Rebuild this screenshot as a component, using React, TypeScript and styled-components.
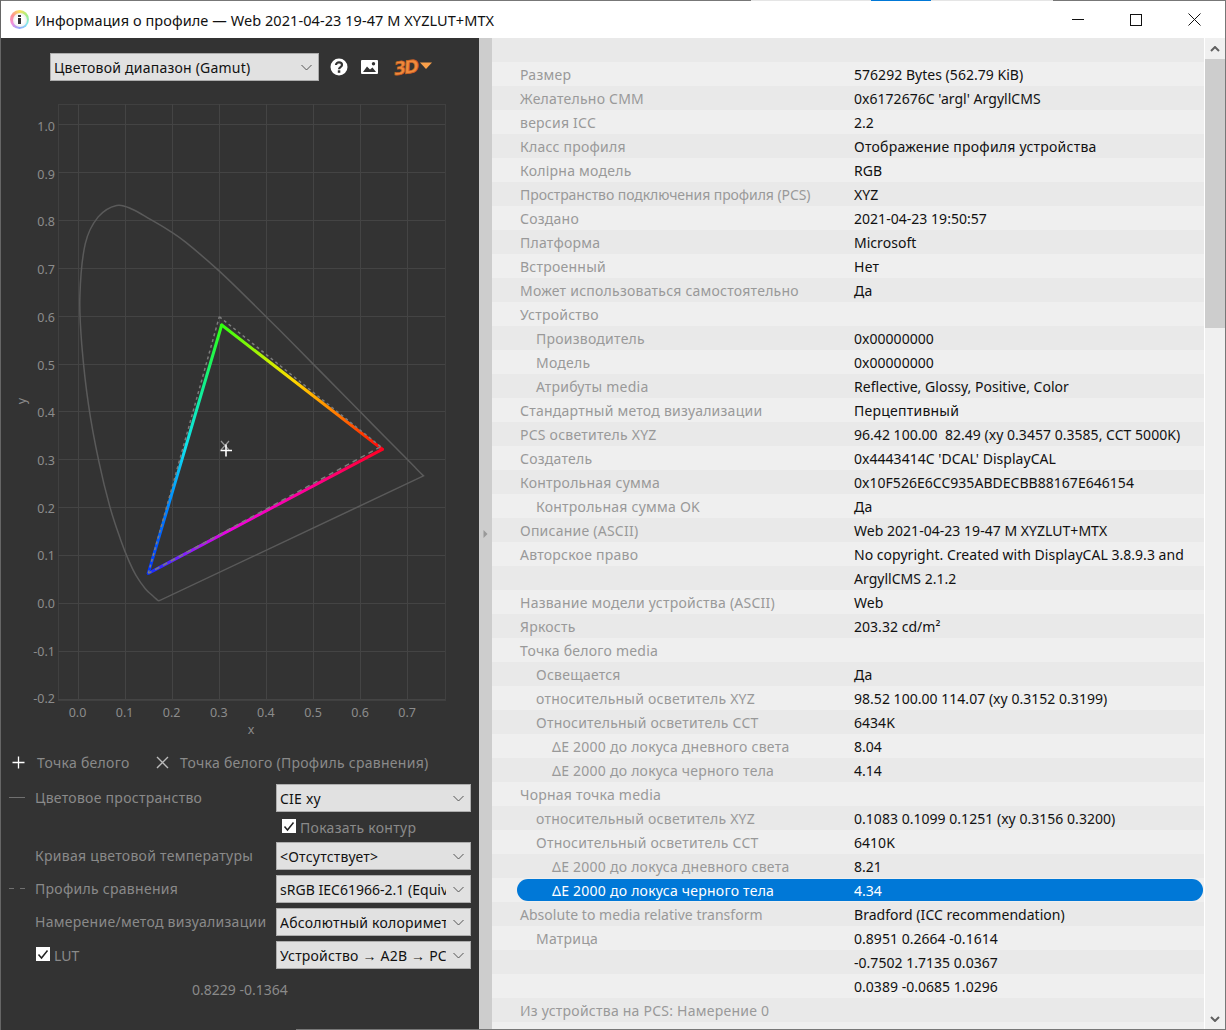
import React from "react";
import styled, { createGlobalStyle } from "styled-components";

const Global = createGlobalStyle`
  html, body { margin: 0; padding: 0; background: #fff; overflow: hidden; }
  * { box-sizing: border-box; }
`;

const FONT = `"Noto Sans", "Open Sans", sans-serif`;
const spacing = (t: string) => (/[а-яё]/i.test(t) ? "0.24px" : "0.03px");

const Win = styled.div`
  width: 1226px; height: 1030px; display: flex; flex-direction: column;
  font-family: ${FONT}; font-size: 14px; overflow: hidden; background: #fff;
  border-left: 1px solid #666; border-right: 1px solid #777;
`;
const TopEdge = styled.div`
  height: 1px; flex: none;
  background: linear-gradient(to right, #777 0 750px, #e5e5e5 750px 870px, #0078d7 870px 930px, #e5e5e5 930px 1052px, #777 1052px);
`;
const BottomEdge = styled.div`
  height: 1px; flex: none;
  background: linear-gradient(to right, #333 0 295px, #777 295px);
`;
const TitleBar = styled.div`
  height: 37px; flex: none; display: flex; align-items: center; position: relative; background: #fff;
`;
const AppIcon = styled.div`
  width: 19px; height: 19px; margin-left: 9px; border-radius: 50%; flex: none; position: relative;
  background: conic-gradient(#f8e060, #a0f080, #80e8f0, #90a8ff, #f090e0, #ff9090, #f8e060);
  display: flex; align-items: center; justify-content: center;
`;
const AppIconFace = styled.div`
  width: 14px; height: 14px; border-radius: 50%; background: radial-gradient(#fff 40%, #ddd);
  display: flex; flex-direction: column; align-items: center; justify-content: center; gap: 1px;
`;
const IconDot = styled.div`width: 3px; height: 2px; background: #333;`;
const IconStem = styled.div`width: 3px; height: 6px; background: #333;`;
const TitleText = styled.div`
  margin-left: 6px; font-size: 14.5px; color: #111; white-space: nowrap; letter-spacing: 0.07px;
`;
const CapButtons = styled.div`
  margin-left: auto; display: flex; height: 100%; margin-right: 1px;
`;
const CapButton = styled.div`
  width: 58.5px; display: flex; align-items: center; justify-content: center; color: #111;
`;
const Body = styled.div`display: flex; flex: 1; min-height: 0;`;
const Left = styled.div`
  width: 478px; flex: none; background: #333; position: relative; color: #8e8e8e;
`;
const Splitter = styled.div`
  width: 13px; flex: none; background: #cdcdcd; position: relative;
  display: flex; align-items: center; justify-content: center;
`;
const Right = styled.div`flex: 1; min-width: 0; display: flex; background: #f0f0f0;`;
const Table = styled.div`flex: 1; min-width: 0; overflow: hidden; position: relative;`;
const Row = styled.div<{ $odd: boolean }>`
  height: 24px; display: flex; align-items: center; background: ${p => p.$odd ? "#efefef" : "#e9e9e9"}; position: relative;
`;
const Pill = styled.div`
  position: absolute; left: 25px; right: 1px; top: 1px; bottom: 1px; border-radius: 11px; background: #0078d7;
`;
const Label = styled.div<{ $level: number; $sel?: boolean; $ls: string }>`
  position: relative; width: 362px; padding-left: ${p => 28 + p.$level * 16}px; color: ${p => p.$sel ? "#fff" : "#999"};
  white-space: pre; letter-spacing: ${p => p.$ls};
`;
const Value = styled.div<{ $sel?: boolean; $ls: string }>`
  position: relative; color: ${p => p.$sel ? "#fff" : "#111"}; white-space: pre; letter-spacing: ${p => p.$ls};
`;
const ScrollBar = styled.div`
  width: 20px; margin-left: 1px; flex: none; display: flex; flex-direction: column; background: #f0f0f0; box-shadow: -1px 0 0 #fff;
`;
const ScrollBtn = styled.div`
  height: 21px; flex: none; display: flex; align-items: center; justify-content: center;
`;
const ScrollThumb = styled.div`height: 269px; background: #cdcdcd; flex: none;`;
const ScrollTrack = styled.div`flex: 1;`;

const Combo = styled.div<{ $x: number; $y: number; $w: number; $ls?: string }>`
  position: absolute; left: ${p => p.$x}px; top: ${p => p.$y}px; width: ${p => p.$w}px; height: 28px;
  background: #e1e1e1; border: 1px solid #adadad; display: flex; align-items: center; color: #111;
  padding-left: 3px; font-size: 14px; letter-spacing: ${p => p.$ls ?? "0.22px"};
`;
const ComboText = styled.div`flex: 1; min-width: 0; overflow: hidden; white-space: nowrap; margin-right: 24px;`;
const Arrow = styled.span`font-family: "Liberation Sans", sans-serif;`;
const ComboArrow = styled.svg`position: absolute; right: 5px; top: 10px;`;
const Caption = styled.div<{ $x: number; $y: number; $ls?: string }>`
  position: absolute; left: ${p => p.$x}px; top: ${p => p.$y}px; color: #8a8a8a; height: 20px; line-height: 20px;
  white-space: nowrap; letter-spacing: ${p => p.$ls ?? "0.28px"};
`;
const Box = styled.div<{ $x: number; $y: number }>`
  position: absolute; left: ${p => p.$x}px; top: ${p => p.$y}px; width: 14px; height: 14px; background: #fff;
  display: flex; align-items: center; justify-content: center;
`;
const Glyph = styled.svg<{ $x: number; $y: number }>`
  position: absolute; left: ${p => p.$x}px; top: ${p => p.$y}px; overflow: visible;
`;
const ChartSvg = styled.svg`
  position: absolute; left: -1px; top: 0; font-family: ${FONT}; font-size: 12.5px;
`;

const rows: [string, string, number, string?][] = [
  ["", "", 0],
  ["Размер", "576292 Bytes (562.79 KiB)", 0],
  ["Желательно CMM", "0x6172676C 'argl' ArgyllCMS", 0],
  ["версия ICC", "2.2", 0],
  ["Класс профиля", "Отображение профиля устройства", 0],
  ["Колірна модель", "RGB", 0],
  ["Пространство подключения профиля (PCS)", "XYZ", 0, "-0.07px"],
  ["Создано", "2021-04-23 19:50:57", 0],
  ["Платформа", "Microsoft", 0],
  ["Встроенный", "Нет", 0],
  ["Может использоваться самостоятельно", "Да", 0],
  ["Устройство", "", 0],
  ["Производитель", "0x00000000", 1],
  ["Модель", "0x00000000", 1],
  ["Атрибуты media", "Reflective, Glossy, Positive, Color", 1],
  ["Стандартный метод визуализации", "Перцептивный", 0],
  ["PCS осветитель XYZ", "96.42 100.00  82.49 (xy 0.3457 0.3585, CCT 5000K)", 0],
  ["Создатель", "0x4443414C 'DCAL' DisplayCAL", 0],
  ["Контрольная сумма", "0x10F526E6CC935ABDECBB88167E646154", 0],
  ["Контрольная сумма OK", "Да", 1],
  ["Описание (ASCII)", "Web 2021-04-23 19-47 M XYZLUT+MTX", 0],
  ["Авторское право", "No copyright. Created with DisplayCAL 3.8.9.3 and", 0],
  ["", "ArgyllCMS 2.1.2", 0],
  ["Название модели устройства (ASCII)", "Web", 0],
  ["Яркость", "203.32 cd/m²", 0],
  ["Точка белого media", "", 0],
  ["Освещается", "Да", 1],
  ["относительный осветитель XYZ", "98.52 100.00 114.07 (xy 0.3152 0.3199)", 1],
  ["Относительный осветитель CCT", "6434K", 1],
  ["ΔE 2000 до локуса дневного света", "8.04", 2],
  ["ΔE 2000 до локуса черного тела", "4.14", 2],
  ["Чорная точка media", "", 0],
  ["относительный осветитель XYZ", "0.1083 0.1099 0.1251 (xy 0.3156 0.3200)", 1],
  ["Относительный осветитель CCT", "6410K", 1],
  ["ΔE 2000 до локуса дневного света", "8.21", 2],
  ["ΔE 2000 до локуса черного тела", "4.34", 2],
  ["Absolute to media relative transform", "Bradford (ICC recommendation)", 0],
  ["Матрица", "0.8951 0.2664 -0.1614", 1],
  ["", "-0.7502 1.7135 0.0367", 0],
  ["", "0.0389 -0.0685 1.0296", 0],
  ["Из устройства на PCS: Намерение 0", "", 0],
  ["", "", 0],
];

const locus: number[][] = [
  [.1741,.005],[.1714,.0051],[.1689,.0069],[.1644,.0109],[.1566,.0177],[.144,.0297],[.1241,.0578],[.1096,.0868],[.0913,.1327],[.0687,.2007],[.0454,.295],[.0235,.4127],[.0092,.5384],[.0050,.6400],[.0165,.7502],[.044,.806],[.083,.83],[.1162,.8222],[.1547,.8009],[.1929,.7786],[.2296,.7533],[.3016,.6923],[.3731,.6245],[.4441,.5547],[.5125,.4866],[.5752,.4242],[.627,.3725],[.6915,.3083],[.719,.2809],[.7347,.2653],
];
// chart coordinates are page coordinates minus the title bar (y - 38)
const OY = 38;
const px = (x: number) => 77.5 + x * 471;
const py = (y: number) => 603 - OY - y * 479;

// Catmull-Rom smoothing of the spectral locus, closed by the straight purple line
const locusPath = (() => {
  const p = locus.map(([x, y]) => [px(x), py(y)]);
  let d = `M${p[0][0].toFixed(1)} ${p[0][1].toFixed(1)}`;
  for (let i = 0; i < p.length - 1; i++) {
    const a = p[Math.max(i - 1, 0)], b = p[i], c = p[i + 1], e = p[Math.min(i + 2, p.length - 1)];
    const c1 = [b[0] + (c[0] - a[0]) / 6, b[1] + (c[1] - a[1]) / 6];
    const c2 = [c[0] - (e[0] - b[0]) / 6, c[1] - (e[1] - b[1]) / 6];
    d += `C${c1[0].toFixed(1)} ${c1[1].toFixed(1)} ${c2[0].toFixed(1)} ${c2[1].toFixed(1)} ${c[0].toFixed(1)} ${c[1].toFixed(1)}`;
  }
  return d + "Z";
})();

const xTicks = [0, .1, .2, .3, .4, .5, .6, .7];
const yTicks = [1, .9, .8, .7, .6, .5, .4, .3, .2, .1, 0, -.1, -.2];

const G = { x: 221.7, y: 325 - OY };
const R = { x: 382.3, y: 449.3 - OY };
const B = { x: 148.3, y: 573.3 - OY };
const G2 = { x: 219.3, y: 316.7 - OY };
const R2 = { x: 380.7, y: 446.7 - OY };

const Chevron = () => (
  <ComboArrow width="13" height="7" viewBox="0 0 13 7">
    <path d="M1.5 1 L6.5 6 L11.5 1" fill="none" stroke="#555" strokeWidth="1" />
  </ComboArrow>
);
const Check = () => (
  <svg width="12" height="12" viewBox="0 0 12 12">
    <path d="M1.5 6.5 L4.5 10 L10.5 2.5" fill="none" stroke="#222" strokeWidth="1.5" />
  </svg>
);

const Chart = () => (
  <ChartSvg width="480" height="720">
    <defs>
      <linearGradient id="gr" gradientUnits="userSpaceOnUse" x1={G.x} y1={G.y} x2={R.x} y2={R.y}>
        <stop offset="0" stopColor="#30ff10" />
        <stop offset=".3" stopColor="#c8f000" />
        <stop offset=".45" stopColor="#ffd800" />
        <stop offset=".7" stopColor="#ff8000" />
        <stop offset=".9" stopColor="#ff3000" />
        <stop offset="1" stopColor="#ff0010" />
      </linearGradient>
      <linearGradient id="rb" gradientUnits="userSpaceOnUse" x1={R.x} y1={R.y} x2={B.x} y2={B.y}>
        <stop offset="0" stopColor="#ff0020" />
        <stop offset=".3" stopColor="#ff0090" />
        <stop offset=".65" stopColor="#f000e0" />
        <stop offset=".85" stopColor="#8020ff" />
        <stop offset="1" stopColor="#1030ff" />
      </linearGradient>
      <linearGradient id="bg" gradientUnits="userSpaceOnUse" x1={B.x} y1={B.y} x2={G.x} y2={G.y}>
        <stop offset="0" stopColor="#0030ff" />
        <stop offset=".3" stopColor="#0090ff" />
        <stop offset=".5" stopColor="#10e0f0" />
        <stop offset=".75" stopColor="#10f090" />
        <stop offset="1" stopColor="#30ff10" />
      </linearGradient>
    </defs>
    <g stroke="#444" strokeWidth="1" shapeRendering="crispEdges">
      <rect x="58.5" y="66.5" width="387" height="596" fill="none" stroke="#404040" />
      {xTicks.map(t => <line key={t} x1={Math.round(px(t)) + .5} x2={Math.round(px(t)) + .5} y1="66" y2="662" />)}
      {yTicks.map(t => <line key={t} x1="58" x2="445" y1={Math.round(py(t)) + .5} y2={Math.round(py(t)) + .5} />)}
    </g>
    <path d={locusPath} fill="none" stroke="#5a5a5a" strokeWidth="1.5" />
    <g fill="none" strokeLinecap="round">
      <line x1={G.x} y1={G.y} x2={R.x} y2={R.y} stroke="url(#gr)" strokeWidth="3" />
      <line x1={R.x} y1={R.y} x2={B.x} y2={B.y} stroke="url(#rb)" strokeWidth="3" />
      <line x1={B.x} y1={B.y} x2={G.x} y2={G.y} stroke="url(#bg)" strokeWidth="3" />
    </g>
    <g fill="none" stroke="#7c7c7c" strokeWidth="1.5" strokeDasharray="5 4">
      <line x1={G2.x} y1={G2.y} x2={R2.x} y2={R2.y} strokeDasharray="3 3" />
      <line x1={R2.x} y1={R2.y} x2={B.x} y2={B.y} />
      <line x1={B.x} y1={B.y} x2={G2.x} y2={G2.y} strokeDasharray="3 3" />
    </g>
    <path d="M221 403 L229 412 M229 403 L221 412" stroke="#999" strokeWidth="1.2" fill="none" />
    <path d="M226 444.5 V456.5 M220.500 450.500 H232" transform={`translate(0 ${-OY})`} stroke="#fff" strokeWidth="1.6" fill="none" />
    <g fill="#8c8c8c" stroke="none">
      {yTicks.map(t => <text key={t} x="55" y={570 - t * 477} textAnchor="end">{t.toFixed(1)}</text>)}
      {xTicks.map(t => <text key={t} x={px(t)} y="678.500" textAnchor="middle">{t.toFixed(1)}</text>)}
      <text x="251" y="696" textAnchor="middle">x</text>
      <text x="0" y="0" textAnchor="middle" transform="translate(26 363) rotate(-90)">y</text>
    </g>
  </ChartSvg>
);

export default function App() {
  return (
    <Win>
      <Global />
      <TopEdge />
      <TitleBar>
        <AppIcon>
          <AppIconFace>
            <IconDot />
            <IconStem />
          </AppIconFace>
        </AppIcon>
        <TitleText>Информация о профиле — Web 2021-04-23 19-47 M XYZLUT+MTX</TitleText>
        <CapButtons>
          <CapButton>
            <svg width="12" height="2" viewBox="0 0 12 2"><rect width="12" height="1" fill="#111" /></svg>
          </CapButton>
          <CapButton>
            <svg width="12" height="12" viewBox="0 0 12 12"><rect x=".5" y=".5" width="11" height="11" fill="none" stroke="#111" /></svg>
          </CapButton>
          <CapButton>
            <svg width="13" height="13" viewBox="0 0 13 13"><path d="M.5 .5 L12.500 12.500 M12.500 .5 L.5 12.500" stroke="#111" fill="none" /></svg>
          </CapButton>
        </CapButtons>
      </TitleBar>
      <Body>
        <Left>
          <Combo $x={49} $y={15} $w={269}>
            <ComboText>Цветовой диапазон (Gamut)</ComboText>
            <Chevron />
          </Combo>
          <Glyph $x={329} $y={20} width="18" height="18" viewBox="0 0 18 18">
            <circle cx="9" cy="9" r="8.500" fill="#fff" />
            <path d="M6 7 C6 3.600 12 3.600 12 7 C12 9.200 9 9 9 11.200" fill="none" stroke="#333" strokeWidth="2.200" />
            <rect x="7.800" y="12.300" width="2.500" height="2.500" fill="#333" />
          </Glyph>
          <Glyph $x={360} $y={22} width="17" height="14" viewBox="0 0 17 14">
            <rect x="0" y="0" width="17" height="14" rx="1" fill="#fff" />
            <path d="M2 12 L6 6.500 L9 9.500 L11.500 7.500 L15 12 Z" fill="#333" />
            <circle cx="12.500" cy="3.800" r="1.700" fill="#333" />
          </Glyph>
          <Glyph $x={393} $y={16} width="42" height="26" viewBox="0 0 42 26">
            <text x="0" y="20" transform="rotate(-8 10 15)" fontFamily="'DejaVu Sans', sans-serif" fontStyle="italic" fontWeight="700" fontSize="18" fill="#f08a3c" stroke="#c85f20" strokeWidth=".7" letterSpacing="-2.200">3D</text>
            <path d="M26 8.500 H38 L32 15 Z" fill="#f9a04a" />
          </Glyph>
          <Chart />

          <Glyph $x={11} $y={718} width="13" height="13" viewBox="0 0 13 13">
            <path d="M6.500 .5 V12.500 M.5 6.500 H12.500" stroke="#fff" strokeWidth="1.300" fill="none" />
          </Glyph>
          <Caption $x={36} $y={715}>Точка белого</Caption>
          <Glyph $x={155} $y={718} width="13" height="13" viewBox="0 0 13 13">
            <path d="M1 1 L12 12 M12 1 L1 12" stroke="#bbb" strokeWidth="1.400" fill="none" />
          </Glyph>
          <Caption $x={179} $y={715}>Точка белого (Профиль сравнения)</Caption>

          <Glyph $x={8} $y={759} width="17" height="2" viewBox="0 0 17 2"><rect width="16" height="1" fill="#707070" /></Glyph>
          <Caption $x={34} $y={750}>Цветовое пространство</Caption>
          <Combo $x={275} $y={746} $w={195}><ComboText>CIE xy</ComboText><Chevron /></Combo>

          <Box $x={281} $y={781}><Check /></Box>
          <Caption $x={299} $y={780}>Показать контур</Caption>

          <Caption $x={34} $y={808}>Кривая цветовой температуры</Caption>
          <Combo $x={275} $y={804} $w={195}><ComboText>&lt;Отсутствует&gt;</ComboText><Chevron /></Combo>

          <Glyph $x={8} $y={850} width="17" height="2" viewBox="0 0 17 2">
            <rect width="5" height="1" fill="#707070" /><rect x="11" width="5" height="1" fill="#707070" />
          </Glyph>
          <Caption $x={34} $y={841}>Профиль сравнения</Caption>
          <Combo $x={275} $y={837} $w={195} $ls="0.02px"><ComboText>sRGB IEC61966-2.1 (Equivalent to)</ComboText><Chevron /></Combo>

          <Caption $x={34} $y={874}>Намерение/метод визуализации</Caption>
          <Combo $x={275} $y={870} $w={195}><ComboText>Абсолютный колориметрический</ComboText><Chevron /></Combo>

          <Box $x={35} $y={909}><Check /></Box>
          <Caption $x={53} $y={908} $ls="0">LUT</Caption>
          <Combo $x={275} $y={903} $w={195}><ComboText>Устройство <Arrow>→</Arrow> A2B <Arrow>→</Arrow> PCS</ComboText><Chevron /></Combo>

          <Caption $x={191} $y={942} $ls="0">0.8229 -0.1364</Caption>
        </Left>
        <Splitter>
          <svg width="5" height="8" viewBox="0 0 5 8"><path d="M.5 0 L4.500 4 L.5 8 Z" fill="#999" /></svg>
        </Splitter>
        <Right>
          <Table>
            {rows.map(([l, v, lvl, ls], i) => {
              const sel = i === 35;
              return (
                <Row key={i} $odd={i % 2 === 1}>
                  {sel && <Pill />}
                  <Label $level={lvl} $sel={sel} $ls={ls ?? spacing(l)}>{l}</Label>
                  <Value $sel={sel} $ls={spacing(v)}>{v}</Value>
                </Row>
              );
            })}
          </Table>
          <ScrollBar>
            <ScrollBtn>
              <svg width="10" height="6" viewBox="0 0 10 6"><path d="M1 5 L5 1 L9 5" fill="none" stroke="#606060" strokeWidth="2" /></svg>
            </ScrollBtn>
            <ScrollThumb />
            <ScrollTrack />
            <ScrollBtn>
              <svg width="10" height="6" viewBox="0 0 10 6"><path d="M1 1 L5 5 L9 1" fill="none" stroke="#606060" strokeWidth="2" /></svg>
            </ScrollBtn>
          </ScrollBar>
        </Right>
      </Body>
      <BottomEdge />
    </Win>
  );
}
